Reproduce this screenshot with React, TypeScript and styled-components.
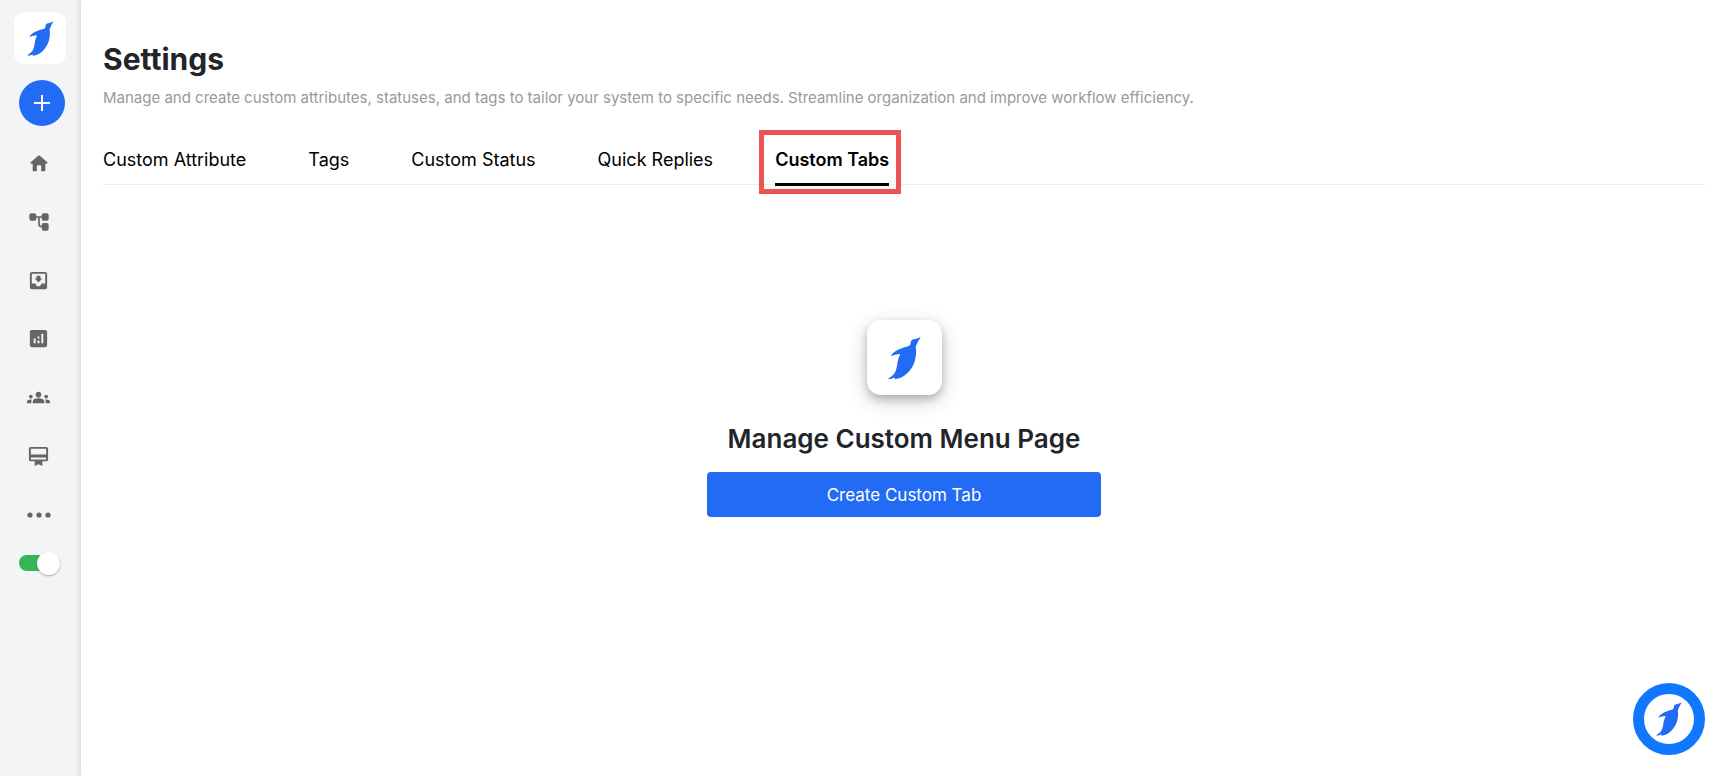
import React, { useState } from "react";
import styled, { createGlobalStyle, css } from "styled-components";
import {
  MdAnalytics,
  MdCardMembership,
  MdGroups,
  MdMoveToInbox,
} from "react-icons/md";

const GlobalStyle = createGlobalStyle`
  *, *::before, *::after {
    box-sizing: border-box;
  }

  body {
    margin: 0;
    background: #fff;
    color: #212529;
    font-family: Inter, "Liberation Sans", sans-serif;
  }

  button {
    border: 0;
    padding: 0;
    font: inherit;
    cursor: pointer;
  }
`;

const Shell = styled.div`
  display: flex;
  min-height: 100vh;
`;

const Sidebar = styled.aside`
  flex: 0 0 81px;
  padding: 12px 0 12px 14px;
  background: #f2f4f6;
`;

const LogoTile = styled.a<{ $large?: boolean }>`
  display: flex;
  align-items: center;
  justify-content: center;
  width: 52px;
  height: 52px;
  border-radius: 10px;
  background: #fff;

  ${({ $large }) =>
    $large &&
    css`
      width: 75px;
      height: 75px;
      border-radius: 14px;
      box-shadow: 0 4px 8px rgba(0, 0, 0, 0.2), 0 6px 20px rgba(0, 0, 0, 0.19);
    `}
`;

const SideControls = styled.div`
  display: flex;
  flex-direction: column;
  align-items: flex-start;
  padding: 16px 0 0 5px;
`;

const AddButton = styled.button`
  display: flex;
  align-items: center;
  justify-content: center;
  width: 46px;
  height: 46px;
  border-radius: 50%;
  background: #226cf5;
`;

const SideNav = styled.nav`
  display: flex;
  flex-direction: column;
  justify-content: space-between;
  height: 376px;
  margin: 25px 0 28px;
`;

const SideLink = styled.a`
  display: flex;
  align-items: center;
  justify-content: center;
  width: 39px;
  height: 24px;
  color: #636566;
`;

const Toggle = styled.input`
  appearance: none;
  display: flex;
  align-items: center;
  width: 41px;
  height: 16px;
  margin: 0;
  border-radius: 8px;
  background: #b5b9bd;
  cursor: pointer;

  &::before {
    content: "";
    flex: none;
    width: 23px;
    height: 23px;
    border-radius: 50%;
    background: #fff;
    box-shadow: 0 1px 2px rgba(0, 0, 0, 0.3);
  }

  &:checked {
    justify-content: flex-end;
    background: #35b558;
  }
`;

const Main = styled.main`
  flex: 1;
  min-width: 0;
  padding: 41px 12px 0 22px;
  background: #fff;
  box-shadow: 0 0 6px rgba(0, 0, 0, 0.2);
`;

const Title = styled.h1`
  margin: 0;
  font-size: 30px;
  line-height: 36px;
  font-weight: 700;
`;

const Lead = styled.p`
  margin: 9px 0 0;
  font-size: 15px;
  line-height: 24px;
  color: #999;
`;

const TabBar = styled.div`
  display: flex;
  gap: 62px;
  margin-top: 37px;
  border-bottom: 1px solid #ececec;
`;

const Tab = styled.button<{ $active: boolean }>`
  position: relative;
  height: 39px;
  margin-bottom: -2px;
  padding-bottom: 10px;
  border-bottom: 3px solid ${({ $active }) => ($active ? "#000" : "transparent")};
  background: none;
  color: #000;
  font-size: 18px;
  line-height: 24px;
  font-weight: ${({ $active }) => ($active ? 600 : 400)};
  white-space: nowrap;
`;

const Highlight = styled.span`
  position: absolute;
  inset: -17px -12px -11px -16px;
  border: 5px solid #ec5454;
  pointer-events: none;
`;

const EmptyState = styled.section`
  display: flex;
  flex-direction: column;
  align-items: center;
  width: 394px;
  max-width: 100%;
  margin: 135px auto 0;
`;

const EmptyTitle = styled.h2`
  margin: 28px 0 17px;
  font-size: 26px;
  line-height: 32px;
  font-weight: 600;
  white-space: nowrap;
`;

const PrimaryButton = styled.button`
  width: 100%;
  height: 45px;
  border-radius: 4px;
  background: #226cf5;
  color: #fff;
  font-size: 17px;
`;

const ChatButton = styled.button`
  position: fixed;
  right: 12px;
  bottom: 21px;
  display: flex;
  align-items: center;
  justify-content: center;
  width: 72px;
  height: 72px;
  border: 11px solid #0f78ff;
  border-radius: 50%;
  background: #fff;
`;

const Bird = ({ height }: { height: number }) => (
  <svg
    width={Math.round((height * 102) / 134)}
    height={height}
    viewBox="111 75 102 134"
    fill="#226cf5"
    aria-hidden="true"
  >
    <path d="M212 76C205 80 198 83 190 84C184 86 181 90 181 95C181 101 179 104 173 106C158 110 144 115 134 121C126 126 121 132 120 137C129 133 139 130 149 130C143 141 141 153 139 165C137 178 134 186 128 193C123 199 116 202 111 207C117 208 123 207 128 204C132 202 134 203 131 208C141 207 151 204 160 198C175 187 187 172 193 154C198 138 199 122 197 108C197 104 199 101 201 98C203 90 208 85 212 76Z" />
  </svg>
);

const HomeIcon = () => (
  <svg width="18" height="17" viewBox="0 0 54 51" fill="currentColor">
    <path d="M24.500 2.500Q27 .5 29.500 2.500L52 22Q54 26 50 26H46V46Q46 49 43 49H33.500V34Q33.500 31 30.500 31H23.500Q20.500 31 20.500 34V49H11Q8 49 8 46V26H4Q0 26 2 22Z" />
  </svg>
);

const FlowIcon = () => (
  <svg width="20" height="18" viewBox="0 0 60 54" fill="currentColor">
    <rect x="1" y="1" width="21" height="22" rx="6" />
    <rect x="38" y="1" width="21" height="22" rx="6" />
    <rect x="38" y="30" width="21" height="23" rx="6" />
    <path
      d="M20 12H40M30 12V34Q30 41 40 41"
      fill="none"
      stroke="currentColor"
      strokeWidth="5"
    />
  </svg>
);

const DotsIcon = () => (
  <svg width="24" height="6" viewBox="0 0 24 6" fill="currentColor">
    <circle cx="3" cy="3" r="2.600" />
    <circle cx="12" cy="3" r="2.600" />
    <circle cx="21" cy="3" r="2.600" />
  </svg>
);

const navItems = [
  { label: "Home", icon: <HomeIcon /> },
  { label: "Flows", icon: <FlowIcon /> },
  { label: "Inbox", icon: <MdMoveToInbox size={23} /> },
  { label: "Analytics", icon: <MdAnalytics size={23} /> },
  { label: "Contacts", icon: <MdGroups size={23} /> },
  { label: "Membership", icon: <MdCardMembership size={23} /> },
  { label: "More", icon: <DotsIcon /> },
];

const tabs = [
  "Custom Attribute",
  "Tags",
  "Custom Status",
  "Quick Replies",
  "Custom Tabs",
];

export default function App() {
  const [active, setActive] = useState("Custom Tabs");
  const [online, setOnline] = useState(true);

  return (
    <Shell>
      <GlobalStyle />
      <Sidebar>
        <LogoTile href="#" aria-label="Dashboard">
          <Bird height={35} />
        </LogoTile>
        <SideControls>
          <AddButton aria-label="Add">
            <svg width="16" height="16" viewBox="0 0 16 16" stroke="#fff" strokeWidth="2">
              <path d="M8 0V16M0 8H16" />
            </svg>
          </AddButton>
          <SideNav>
            {navItems.map(({ label, icon }) => (
              <SideLink key={label} href="#" aria-label={label}>
                {icon}
              </SideLink>
            ))}
          </SideNav>
          <Toggle
            type="checkbox"
            role="switch"
            aria-label="Online"
            checked={online}
            onChange={(event) => setOnline(event.target.checked)}
          />
        </SideControls>
      </Sidebar>

      <Main>
        <Title>Settings</Title>
        <Lead>
          Manage and create custom attributes, statuses, and tags to tailor your
          system to specific needs. Streamline organization and improve workflow
          efficiency.
        </Lead>
        <TabBar role="tablist">
          {tabs.map((tab) => (
            <Tab
              key={tab}
              role="tab"
              aria-selected={tab === active}
              $active={tab === active}
              onClick={() => setActive(tab)}
            >
              {tab}
              {tab === active && <Highlight />}
            </Tab>
          ))}
        </TabBar>

        <EmptyState>
          <LogoTile as="div" $large>
            <Bird height={44} />
          </LogoTile>
          <EmptyTitle>Manage Custom Menu Page</EmptyTitle>
          <PrimaryButton>Create Custom Tab</PrimaryButton>
        </EmptyState>
      </Main>

      <ChatButton aria-label="Open chat">
        <Bird height={34} />
      </ChatButton>
    </Shell>
  );
}
